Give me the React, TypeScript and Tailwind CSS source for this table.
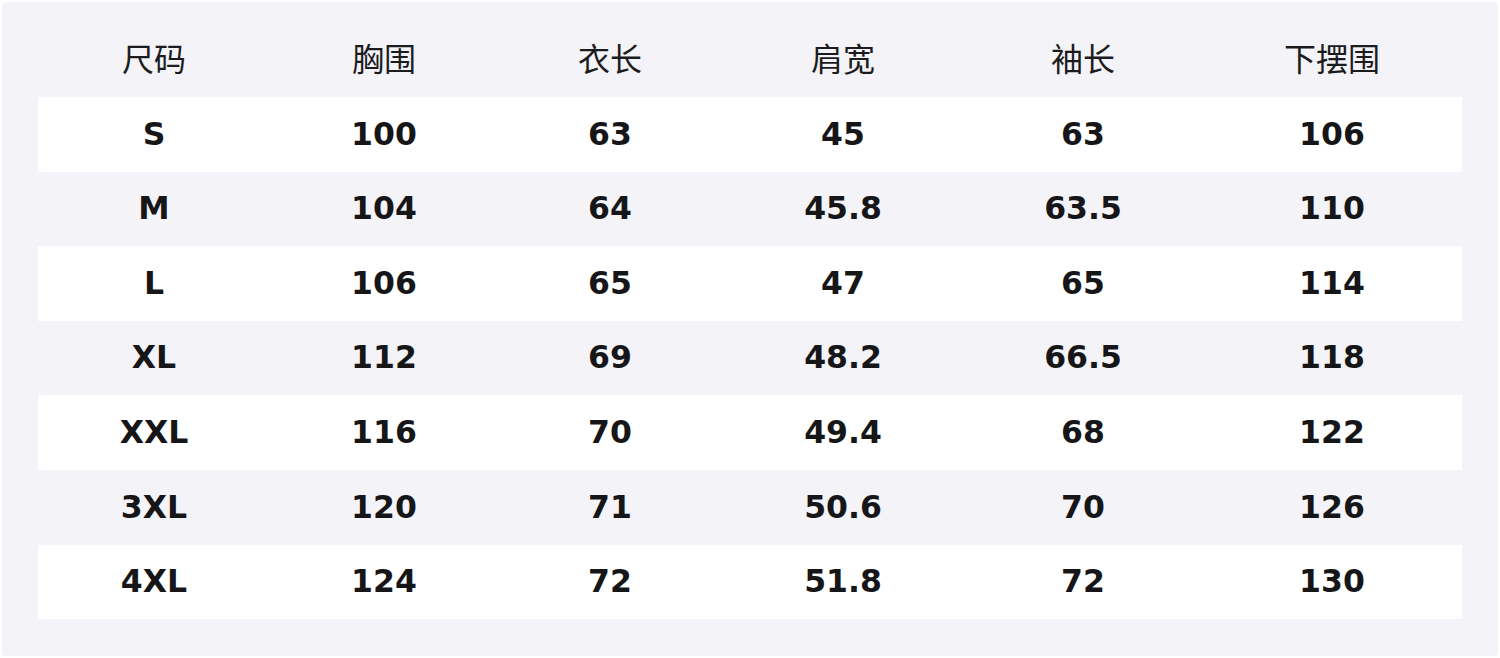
import React from 'react';

const headers = ['尺码', '胸围', '衣长', '肩宽', '袖长', '下摆围'];

// size chart rows: size, chest, length, shoulder, sleeve, hem
const rows = [
    ['S', '100', '63', '45', '63', '106'],
    ['M', '104', '64', '45.8', '63.5', '110'],
    ['L', '106', '65', '47', '65', '114'],
    ['XL', '112', '69', '48.2', '66.5', '118'],
    ['XXL', '116', '70', '49.4', '68', '122'],
    ['3XL', '120', '71', '50.6', '70', '126'],
    ['4XL', '124', '72', '51.8', '72', '130'],
];

const cols = 'grid grid-cols-[232px_228px_224px_242px_238px_260px]';

function App() {
    return (
        <div className="w-[1500px] h-[658px] bg-white p-[2px]">
            <div className="h-full bg-[#f3f3f8] rounded-sm px-[36px] pt-[20px]">
                {/* Header */}
                <div className={`${cols} h-[75px] items-center`}>
                    {headers.map((h) => (
                        <div
                            key={h}
                            className="pb-[6px] text-center text-[32px] text-[#1c1c1e] font-['Noto_Sans_CJK_SC','Noto_Sans',sans-serif]"
                        >
                            {h}
                        </div>
                    ))}
                </div>

                {/* Body */}
                {rows.map((row, i) => (
                    <div
                        key={row[0]}
                        className={`${cols} h-[74.6px] items-center ${i % 2 === 0 ? 'bg-white' : ''}`}
                    >
                        {row.map((cell, j) => (
                            <div
                                key={j}
                                className="text-center text-[31.5px] font-bold text-[#161618] font-['DejaVu_Sans',sans-serif]"
                            >
                                {cell}
                            </div>
                        ))}
                    </div>
                ))}
            </div>
        </div>
    );
}

export default App;
